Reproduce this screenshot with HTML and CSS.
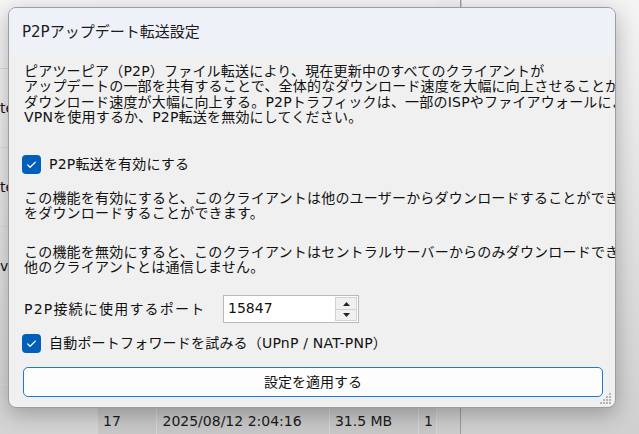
FILE: index.html
```html
<!DOCTYPE html>
<html lang="ja">
<head>
    <meta charset="UTF-8">
    <meta name="viewport" content="width=device-width, initial-scale=1.0">
    <title>P2Pアップデート転送設定</title>
    <link rel="stylesheet" href="styles.css">
</head>
<body>
    <div class="app">
        <div class="side">
            <div class="side-row"></div>
            <div class="side-row">te</div>
            <div class="side-row">te</div>
            <div class="side-row">v</div>
            <div class="side-row"></div>
        </div>
        <div class="main">
            <div class="list"></div>
            <div class="list-row">
                <span class="cell c-id">17</span>
                <span class="cell c-date">2025/08/12 2:04:16</span>
                <span class="cell c-size">31.5 MB</span>
                <span class="cell c-n">1</span>
            </div>
        </div>
        <div class="scroll"></div>
        <div class="panel"></div>
    </div>

    <div class="dialog">
        <div class="title-bar">P2Pアップデート転送設定</div>
        <div class="dialog-body">
            <p class="text">ピアツーピア（P2P）ファイル転送により、現在更新中のすべてのクライアントが<br>アップデートの一部を共有することで、全体的なダウンロード速度を大幅に向上させることが<br>ダウンロード速度が大幅に向上する。P2Pトラフィックは、一部のISPやファイアウォールによって<br>VPNを使用するか、P2P転送を無効にしてください。</p>

            <label class="check-row first">
                <span class="check">
                    <svg width="19" height="19" viewBox="0 0 19 19"><path d="M5.6 9.9 L8.1 12.3 L13.4 7.1" fill="none" stroke="#fff" stroke-width="1.3" stroke-linecap="round" stroke-linejoin="round"/></svg>
                </span>
                <span>P2P転送を有効にする</span>
            </label>

            <p class="text on">この機能を有効にすると、このクライアントは他のユーザーからダウンロードすることができ、<br>をダウンロードすることができます。</p>
            <p class="text off">この機能を無効にすると、このクライアントはセントラルサーバーからのみダウンロードでき、<br>他のクライアントとは通信しません。</p>

            <div class="port-row">
                <span class="port-label">P2P接続に使用するポート</span>
                <div class="spin-box">
                    <span class="spin-value">15847</span>
                    <span class="spin-btns">
                        <span class="spin-btn"><svg width="9" height="6" viewBox="0 0 9 6"><path d="M4.5 1 L8 5 L1 5 Z" fill="#222"/></svg></span>
                        <span class="spin-btn"><svg width="9" height="6" viewBox="0 0 9 6"><path d="M1 1 L8 1 L4.5 5 Z" fill="#222"/></svg></span>
                    </span>
                </div>
            </div>

            <label class="check-row second">
                <span class="check">
                    <svg width="19" height="19" viewBox="0 0 19 19"><path d="M5.6 9.9 L8.1 12.3 L13.4 7.1" fill="none" stroke="#fff" stroke-width="1.3" stroke-linecap="round" stroke-linejoin="round"/></svg>
                </span>
                <span>自動ポートフォワードを試みる（UPnP / NAT-PNP）</span>
            </label>

            <button class="apply-btn">設定を適用する</button>
        </div>
        <svg class="grip" width="12" height="12" viewBox="0 0 12 12">
            <g fill="#b4b4b4">
                <rect x="9" y="1" width="2" height="2"/>
                <rect x="6" y="4" width="2" height="2"/>
                <rect x="9" y="4" width="2" height="2"/>
                <rect x="3" y="7" width="2" height="2"/>
                <rect x="6" y="7" width="2" height="2"/>
                <rect x="9" y="7" width="2" height="2"/>
                <rect x="0" y="10" width="2" height="2"/>
                <rect x="3" y="10" width="2" height="2"/>
                <rect x="6" y="10" width="2" height="2"/>
                <rect x="9" y="10" width="2" height="2"/>
            </g>
        </svg>
    </div>
</body>
</html>
```

FILE: styles.css
```css
body {
    margin: 0;
    width: 639px;
    height: 434px;
    overflow: hidden;
    position: relative;
    font-family: "DejaVu Sans", "Noto Sans CJK JP", sans-serif;
    color: #111;
    background-color: #dcdcdc;
}

/* background window */
.app {
    display: flex;
    height: 434px;
}
.side {
    width: 97px;
    display: flex;
    flex-direction: column;
    background: linear-gradient(#f6f6f6, #d4d4d4);
    font-size: 14px;
}
.side-row {
    height: 78px;
    border-bottom: 1px solid #dcdcdc;
    display: flex;
    align-items: center;
    line-height: 1;
}
.side-row:first-child {
    height: 68px;
}
.main {
    width: 340px;
    display: flex;
    flex-direction: column;
    background: linear-gradient(#f4f4f4, #d2d2d2);
}
.list {
    flex: 1;
}
.list-row {
    height: 26px;
    display: flex;
    background-color: #c8c8c8;
    font-size: 14px;
    color: #1a1a1a;
}
.cell {
    display: flex;
    align-items: center;
    padding-left: 5px;
    border-right: 1px solid #d6d6d6;
}
.c-id { width: 54px; border-left: 1px solid #d6d6d6; }
.c-date { width: 168px; }
.c-size { width: 84px; }
.c-n { width: 12px; }
.scroll {
    width: 23px;
    border-right: 1px solid #9c9c9c;
    background: linear-gradient(#f2f2f2, #cdcdcd);
}
.panel {
    flex: 1;
    border-left: 1px solid #d0d0d0;
    background: linear-gradient(#f4f4f4, #d0d0d0);
}

/* dialog */
.dialog {
    position: absolute;
    left: 8px;
    top: 7px;
    width: 608px;
    height: 401px;
    box-sizing: border-box;
    border: 1px solid #9d9d9d;
    border-radius: 8px;
    background-color: #f0f0f0;
    box-shadow: 0 6px 22px rgba(0, 0, 0, 0.28);
    overflow: hidden;
}
.title-bar {
    height: 45px;
    padding-left: 13px;
    padding-bottom: 1px;
    display: flex;
    align-items: center;
    background-color: #eff1f8;
    font-size: 15px;
    color: #1a1a1a;
}
.dialog-body {
    padding: 10px 0 0 15px;
    display: flex;
    flex-direction: column;
    font-size: 14px;
    letter-spacing: 0.2px;
}
.text {
    margin: 0;
    line-height: 15.3px;
    white-space: nowrap;
}
.text.on {
    margin-top: 17px;
}
.text.off {
    margin-top: 23px;
}
.check-row {
    display: flex;
    align-items: center;
    gap: 8px;
    height: 20px;
    margin-left: -2px;
    line-height: 20px;
    white-space: nowrap;
}
.check-row.first {
    margin-top: 29px;
}
.check-row.second {
    margin-top: 10px;
}
.check {
    width: 19px;
    height: 19px;
    border-radius: 4px;
    background-color: #005fb8;
    display: flex;
}
.port-row {
    display: flex;
    align-items: center;
    margin-top: 20px;
    height: 28px;
}
.port-label {
    width: 199px;
    margin-top: -3px;
    letter-spacing: 1.2px;
    white-space: nowrap;
}
.spin-box {
    width: 136px;
    height: 28px;
    box-sizing: border-box;
    border: 1px solid #b9b9b9;
    background-color: #fff;
    display: flex;
    align-items: center;
    justify-content: space-between;
}
.spin-value {
    padding-left: 4px;
    margin-top: -2px;
    letter-spacing: 0;
}
.spin-btns {
    width: 22px;
    height: 24px;
    margin-right: 1px;
    display: flex;
    flex-direction: column;
    background-color: #f0f0f0;
    border: 1px solid #d2d2d2;
    box-sizing: border-box;
}
.spin-btn {
    flex: 1;
    display: flex;
    align-items: center;
    justify-content: center;
}
.spin-btn + .spin-btn {
    border-top: 1px solid #d2d2d2;
}
.apply-btn {
    margin: 14px 0 0 -1px;
    width: 580px;
    height: 30px;
    border: 1px solid #1f78d1;
    border-radius: 5px;
    background-color: #fdfdfd;
    font-family: inherit;
    font-size: 14px;
    color: #111;
    padding: 0 0 2px;
}
.grip {
    position: absolute;
    right: 3px;
    bottom: 3px;
}
```
